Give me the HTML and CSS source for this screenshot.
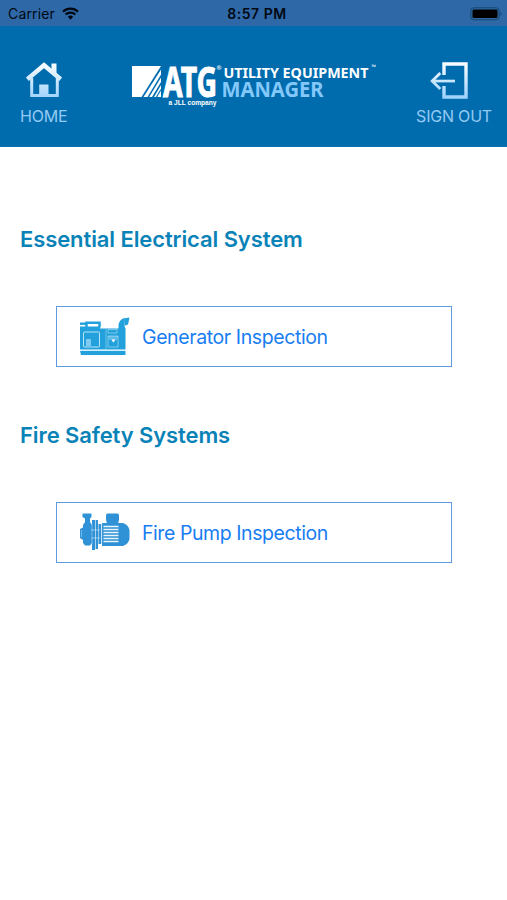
FILE: index.html
```html
<!DOCTYPE html>
<html lang="en">
<head>
    <meta charset="UTF-8">
    <meta name="viewport" content="width=device-width, initial-scale=1.0">
    <title>Utility Equipment Manager</title>
    <link rel="stylesheet" href="styles.css">
</head>
<body>
    <div class="status-bar">
        <div class="carrier">
            <span>Carrier</span>
            <svg class="wifi" width="17" height="13" viewBox="0 0 17 13">
                <path d="M1 4.7a10.6 10.6 0 0 1 15 0" fill="none" stroke="#000813" stroke-width="2.3"/>
                <path d="M3.6 7.6a7 7 0 0 1 9.8 0" fill="none" stroke="#000813" stroke-width="2.1"/>
                <path d="M5.8 9.8a3.9 3.9 0 0 1 5.4 0L8.5 12.7z" fill="#000813"/>
            </svg>
        </div>
        <span class="time">8:57 PM</span>
        <svg class="battery" width="33" height="14" viewBox="0 0 33 14">
            <rect x=".8" y=".8" width="28.4" height="12" rx="3" fill="none" stroke="#164674"/>
            <rect x="2.5" y="2.5" width="25" height="8.6" rx="1.3" fill="#000"/>
            <path d="M30.6 4.5q2 2.3 0 4.6z" fill="#164674"/>
        </svg>
    </div>

    <header class="header">
        <a class="nav-btn home">
            <svg width="38" height="36" viewBox="0 0 38 36">
                <defs>
                    <linearGradient id="fade" x1="0" y1="0" x2="0" y2="36" gradientUnits="userSpaceOnUse">
                        <stop offset="0" stop-color="#fff"/>
                        <stop offset="1" stop-color="#9fd3fb"/>
                    </linearGradient>
                </defs>
                <path d="M2.3 17.2 19 3.2l16.7 14" fill="none" stroke="url(#fade)" stroke-width="4.4"/>
                <path d="M26.5 1.5h5v12l-5-4z" fill="url(#fade)"/>
                <path d="M6.7 16v17.4h25.6V16" fill="none" stroke="url(#fade)" stroke-width="3"/>
                <path d="M14.2 22.5h9.3V34h-9.3z" fill="url(#fade)"/>
            </svg>
            <span>HOME</span>
        </a>

        <svg class="logo" width="252" height="46" viewBox="0 0 252 46">
            <path d="M2 4h29L11.5 35H2z" fill="#fff"/>
            <path d="M31 7.500v5L17.500 35h-4z" fill="#fff"/>
            <path d="M31 15.500v4.500L22 35h-2.800z" fill="#fff"/>
            <path d="M31 23v12h-7z" fill="#fff"/>
            <path d="M31 27.500 26.500 35" stroke="#006cae" stroke-width="1.2"/>
            <text class="logo-atg" x="33" y="34.5" textLength="54" lengthAdjust="spacingAndGlyphs">ATG</text>
            <text class="logo-mark" x="86.5" y="8.2">®</text>
            <text class="logo-sub" x="38.5" y="42.500" textLength="48" lengthAdjust="spacingAndGlyphs">a JLL company</text>
            <text class="logo-top" x="93.5" y="16" textLength="145" lengthAdjust="spacingAndGlyphs">UTILITY EQUIPMENT</text>
            <text class="logo-tm" x="241.5" y="7">™</text>
            <text class="logo-bottom" x="91.5" y="35" textLength="102" lengthAdjust="spacingAndGlyphs">MANAGER</text>
        </svg>

        <a class="nav-btn sign-out">
            <svg width="38" height="38" viewBox="0 0 38 38">
                <path d="M14 14V3h22v33H14V25" fill="none" stroke="url(#fade)" stroke-width="3.4"/>
                <path d="M2 18.7h23v2.7H2z" fill="url(#fade)"/>
                <path d="M10.3 12 2.2 20l8.1 8" fill="none" stroke="url(#fade)" stroke-width="2.8"/>
            </svg>
            <span>SIGN OUT</span>
        </a>
    </header>

    <main class="content">
        <section class="system">
            <h2 class="electrical">Essential Electrical System</h2>
            <a class="inspection">
                <svg class="icon" width="51" height="40" viewBox="0 0 51 40">
                    <g fill="#22a1dc">
                        <path d="M0 11.5h45.5v21H0z"/>
                        <path d="M38.5 12V8.500q.5-6.500 6.500-7.500l-.5 8 1 3z"/>
                        <path d="M45 1.2 49.500.6l-1.500 7-3.500 1.200z"/>
                        <path d="M0 34h45.5v4H1z"/>
                        <path d="M0 5.5h6v2.4H0z"/>
                    </g>
                    <path d="M6.5 11V5.8h13v4.7" fill="none" stroke="#22a1dc" stroke-width="2.5"/>
                    <path d="M0 11h20" stroke="#22a1dc" stroke-width="3"/>
                    <g fill="none" stroke="#b9e4f7">
                        <rect x="3.5" y="15" width="16" height="15" rx="1"/>
                        <path d="M19.5 20v7" stroke-width="1"/>
                        <path d="M26 12v20" stroke-width=".5"/>
                        <path d="M28 12.500h9v3.500h-9zM28 19h10v11H28z" stroke-width=".6"/>
                        <path d="M28 20h10M29 22h8M33 22v3M1 33.3h44" stroke-width=".8"/>
                    </g>
                    <path d="M6 22h5v7H6z" fill="#7fcaee"/>
                    <path d="M31.5 22.5h4l-2 3z" fill="#fff"/>
                </svg>
                <span>Generator Inspection</span>
            </a>
        </section>

        <section class="system">
            <h2 class="fire">Fire Safety Systems</h2>
            <a class="inspection">
                <svg class="icon" width="51" height="40" viewBox="0 0 51 40">
                    <g fill="#2f92d6">
                        <path d="M2.5 1.500h9V5L10 6.500V10l2 3v18l-2 2.500H5L3 31v-3l-3-2V17l3-1.500V13l2-3V6.500L2.500 5z"/>
                        <path d="M12 8h3v30h-3zM15.600 8H18v29h-2.400z"/>
                        <path d="M18.500 12h2.800v20h-2.800z"/>
                        <path d="M27 1.500h11l1 1.500v5l-1 3.500H27L26 8V3z"/>
                        <path d="M22 11h21q5.500 2 6.500 7v9q-1 5-6.500 7H22z"/>
                    </g>
                    <g stroke="#e7f4fc">
                        <path d="M23.500 14.500h15M23.500 17.500h15M23.500 20.500h15M23.500 23.500h15M23.500 26.500h15M23.500 29.500h15" stroke-width="1.600"/>
                        <path d="M1.500 18v7M12 12v20M21.700 12v21" stroke-width=".4"/>
                        <path d="M11 18h9M11 26h9" stroke-width=".5"/>
                    </g>
                </svg>
                <span class="pump">Fire Pump Inspection</span>
            </a>
        </section>
    </main>
</body>
</html>
```
FILE: styles.css
```css
* {
    margin: 0;
    padding: 0;
    box-sizing: border-box;
    font-family: Inter, 'Liberation Sans', sans-serif;
}

body {
    background-color: #fff;
}

.status-bar {
    display: grid;
    grid-template-columns: 1fr auto 1fr;
    align-items: center;
    height: 26px;
    padding: 1px 4px 0 8px;
    background: #2f68a6;
    color: #000813;
    font-size: 14px;
}

.carrier {
    display: flex;
    align-items: center;
    gap: 7px;
    letter-spacing: 0.15px;
}

.time {
    margin-left: 3px;
    font-size: 14px;
    font-weight: 600;
    letter-spacing: 0.5px;
}

.battery {
    justify-self: end;
}

.header {
    display: flex;
    justify-content: space-between;
    align-items: flex-start;
    height: 121px;
    padding: 35px 15px 0 20px;
    background: #006cae;
    border-bottom: 1px solid #0a74b3;
}

.nav-btn {
    display: flex;
    flex-direction: column;
    align-items: center;
    color: #94caf3;
    font-size: 16px;
    line-height: 20px;
    letter-spacing: -0.2px;
}

.nav-btn svg {
    height: 38px;
    margin-bottom: 7px;
}

.sign-out svg {
    margin-right: 11px;
}

.logo {
    margin: 1px 0 0 29px;
}

.logo text {
    font-family: 'Noto Sans', 'Open Sans', sans-serif;
    font-weight: 700;
    fill: #fff;
}

.logo .logo-atg {
    font-size: 42px;
    stroke: #fff;
    stroke-width: 1px;
}

.logo .logo-mark {
    font-size: 6px;
}

.logo .logo-sub {
    font-family: 'Liberation Sans', sans-serif;
    font-size: 7px;
}

.logo .logo-top {
    font-size: 15px;
}

.logo .logo-tm {
    font-size: 6px;
    font-weight: 400;
}

.logo .logo-bottom {
    font-size: 21px;
    fill: #84c8fa;
}

.content {
    padding: 77px 55px 0 20px;
}

.system {
    margin-bottom: 52.5px;
}

.system h2 {
    color: #0983b7;
    font-size: 22px;
    font-weight: 600;
    line-height: 30px;
    margin-bottom: 52px;
    letter-spacing: -0.1px;
}

.inspection {
    display: flex;
    align-items: center;
    height: 61px;
    margin-left: 36px;
    padding-left: 23px;
    border: 1px solid #5f9bdf;
    color: #187df2;
    font-size: 19.5px;
    letter-spacing: -0.4px;
}

.inspection span {
    padding-top: 1px;
}

.inspection .pump {
    letter-spacing: -0.43px;
}

.icon {
    flex: none;
    margin-right: 11px;
}
```
